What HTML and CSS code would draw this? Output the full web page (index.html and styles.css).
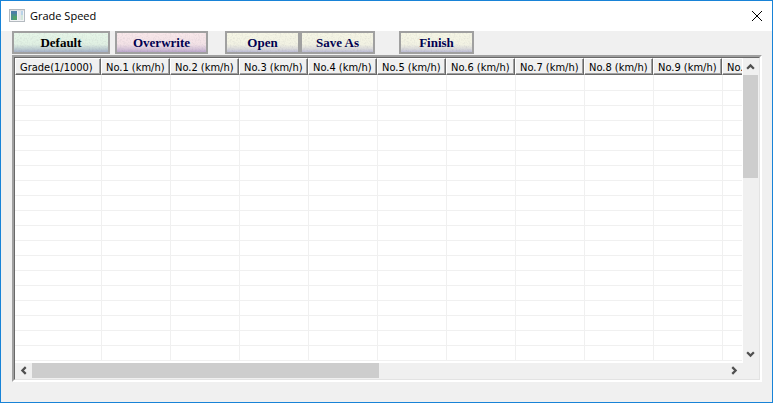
FILE: index.html
```
<!DOCTYPE html>
<html lang="en">
<head>
<meta charset="utf-8">
<title>Grade Speed</title>
<link rel="stylesheet" href="styles.css">
</head>
<body>
<svg class="defs" aria-hidden="true">
  <filter id="grain" x="0" y="0" width="100%" height="100%" color-interpolation-filters="sRGB">
    <feTurbulence type="fractalNoise" baseFrequency="0.6" numOctaves="2" seed="4"/>
    <feColorMatrix values="0 0 0 0 0.5  0 0 0 0 0.5  0 0 0 0 0.55  1.6 0 0 0 -0.7"/>
  </filter>
</svg>
<div class="window">
  <header class="titlebar">
    <svg class="app-icon" viewBox="0 0 16 14" aria-hidden="true" shape-rendering="crispEdges">
      <rect x="0" y="0" width="16" height="13" fill="#b4bac0"/>
      <rect x="1" y="1" width="14" height="1" fill="#d9dee3"/>
      <rect x="1" y="2" width="14" height="10" fill="#f3f4f6"/>
      <rect x="2" y="2" width="6" height="9" fill="#4a8f8c"/>
      <rect x="2" y="2" width="6" height="3" fill="#4b7fa6"/>
      <rect x="4" y="7" width="4" height="4" fill="#4fa06c"/>
      <rect x="9" y="2" width="3" height="9" fill="#e3e6ea"/>
      <rect x="12" y="2" width="2" height="4" fill="#b9d3e8"/>
      <rect x="12" y="6" width="2" height="5" fill="#d2e6da"/>
    </svg>
    <h1>Grade Speed</h1>
    <button class="close" type="button" aria-label="Close">
      <svg viewBox="0 0 12 12" aria-hidden="true"><path d="M1 1 11 11M11 1 1 11"/></svg>
    </button>
  </header>
  <main>
    <div class="toolbar">
      <button class="tool green" type="button"><svg class="grain" aria-hidden="true"><rect width="100%" height="100%" filter="url(#grain)"/></svg><span>Default</span></button>
      <button class="tool pink" type="button"><svg class="grain" aria-hidden="true"><rect width="100%" height="100%" filter="url(#grain)"/></svg><span>Overwrite</span></button>
      <div class="pair">
        <button class="tool cream" type="button"><svg class="grain" aria-hidden="true"><rect width="100%" height="100%" filter="url(#grain)"/></svg><span>Open</span></button>
        <button class="tool cream" type="button"><svg class="grain" aria-hidden="true"><rect width="100%" height="100%" filter="url(#grain)"/></svg><span>Save As</span></button>
      </div>
      <button class="tool cream" type="button"><svg class="grain" aria-hidden="true"><rect width="100%" height="100%" filter="url(#grain)"/></svg><span>Finish</span></button>
    </div>
    <div class="frame">
      <div class="list">
        <div class="view">
          <table>
            <colgroup><col class="grade"><col span="10"></colgroup>
            <thead>
              <tr>
                <th>Grade(1/1000)</th><th>No.1 (km/h)</th><th>No.2 (km/h)</th><th>No.3 (km/h)</th>
                <th>No.4 (km/h)</th><th>No.5 (km/h)</th><th>No.6 (km/h)</th><th>No.7 (km/h)</th>
                <th>No.8 (km/h)</th><th>No.9 (km/h)</th><th>No.10 (km/h)</th>
              </tr>
            </thead>
            <tbody id="rows"></tbody>
          </table>
        </div>
        <div class="bar vertical">
          <button type="button" aria-label="Scroll up"><svg viewBox="0 0 8 6"><path d="M1 5 4 2 7 5"/></svg></button>
          <div class="track"><div class="thumb"></div></div>
          <button type="button" aria-label="Scroll down"><svg viewBox="0 0 8 6"><path d="M1 1 4 4 7 1"/></svg></button>
        </div>
        <div class="bar horizontal">
          <button type="button" aria-label="Scroll left"><svg class="side" viewBox="0 0 6 8"><path d="M5 1 2 4 5 7"/></svg></button>
          <div class="track"><div class="thumb"></div></div>
          <button type="button" aria-label="Scroll right"><svg class="side" viewBox="0 0 6 8"><path d="M1 1 4 4 1 7"/></svg></button>
        </div>
      </div>
    </div>
  </main>
</div>
<script src="script.js"></script>
</body>
</html>
```
FILE: styles.css
```
* { box-sizing: border-box; }
body { margin: 0; background: #f0f0f0; color: #000; }
button { margin: 0; padding: 0; border: 0; background: none; }
.defs { position: absolute; width: 0; height: 0; }

.window {
  display: flex;
  flex-direction: column;
  height: 100vh;
  border: 1px solid #1883d7;
  background: #f0f0f0;
}

.titlebar {
  display: flex;
  align-items: center;
  gap: 5px;
  height: 30px;
  padding: 0 9px 0 8px;
  background: #fff;
}
.app-icon { width: 16px; height: 14px; }
.titlebar h1 {
  flex: 1;
  margin: 0;
  font: 11px/16px "Open Sans", "Noto Sans", sans-serif;
}
.close { width: 12px; height: 12px; }
.close svg { display: block; width: 12px; height: 12px; }
.close path { fill: none; stroke: #000; stroke-width: 1; }

main {
  display: flex;
  flex: 1;
  flex-direction: column;
  min-height: 0;
  padding: 0 10px 20px 11px;
}

.toolbar { display: flex; margin-bottom: 1px; }
.tool {
  position: relative;
  width: 75px;
  height: 23px;
  border: 2px solid #a0a0a0;
  color: #000050;
  font: bold 13px/19px "Liberation Serif", serif;
}
.tool span { position: relative; }
.grain { position: absolute; inset: 0; width: 100%; height: 100%; opacity: 0.2; }
.green {
  width: 98px;
  margin-right: 5px;
  background: linear-gradient(#e6f6e8, #e0f0e3 60%, #bccbd0 85%, #a3afc6);
  color: #000;
}
.pink {
  width: 93px;
  margin-right: 17px;
  background: linear-gradient(#f9e8ea, #f2e1e6 60%, #d5c3d8 85%, #b9a5cb);
}
.cream { background: linear-gradient(#f6f6e5, #f2f2e3 60%, #d8d8da 85%, #bbbbd4); }
.pair { display: flex; margin-right: 24px; }

.frame {
  display: flex;
  flex: 1;
  min-height: 0;
  border: 2px solid;
  border-color: #a0a0a0 #fff #fff #a0a0a0;
}
.list {
  display: grid;
  flex: 1;
  grid-template: minmax(0, 1fr) 16px / minmax(0, 1fr) 16px;
  min-width: 0;
  border: 1px solid;
  border-color: #696969 #e3e3e3 #e3e3e3 #696969;
}
.view { overflow: hidden; border-right: 1px solid #fff; background: #fff; }

table {
  width: 776px;
  border-spacing: 0;
  table-layout: fixed;
  font: 11px/13px "DejaVu Sans Condensed", "DejaVu Sans", sans-serif;
}
col { width: 69px; }
.grade { width: 86px; }
th {
  height: 17px;
  padding: 2px 0 0 4px;
  border: 1px solid;
  border-color: #fff #696969 #696969 #fff;
  background: #f0f0f0;
  box-shadow: inset -1px -1px #a0a0a0;
  font-weight: normal;
  text-align: left;
  white-space: nowrap;
}
td { height: 15px; padding: 0; border-bottom: 1px solid #f0f0f0; }
td + td { border-left: 1px solid #f0f0f0; }
tbody tr:first-child td { height: 16px; }

.bar { display: flex; background: #f0f0f0; }
.bar button { display: grid; flex: none; width: 17px; height: 17px; place-items: center; }
.bar svg { width: 9px; height: 7px; }
.bar .side { width: 7px; height: 9px; }
.bar path { fill: none; stroke: #505050; stroke-width: 2; }
.track { display: flex; flex: 1; }
.thumb { background: #cdcdcd; }
.vertical { flex-direction: column; }
.vertical .track { flex-direction: column; }
.vertical button { width: 15px; }
.vertical .thumb { width: 15px; height: 38%; }
.horizontal button { height: 15px; }
.horizontal .thumb { width: 50%; height: 15px; }
```
FILE: script.js
```
const body = document.getElementById("rows");
for (let r = 0; r < 19; r++) {
  const row = body.insertRow();
  for (let c = 0; c < 11; c++) row.insertCell();
}
```
